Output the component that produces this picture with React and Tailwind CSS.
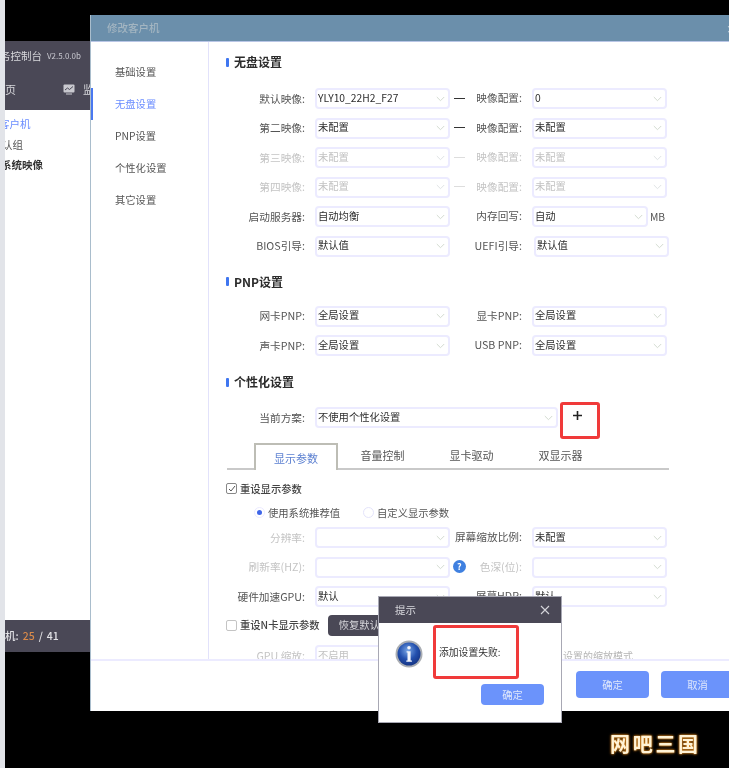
import React from "react";

const FONT = "font-['Noto_Sans_CJK_SC','Noto_Sans',sans-serif]";

function Chevron({ muted }) {
  return (
    <svg width="9" height="6" viewBox="0 0 9 6" fill="none" className="shrink-0">
      <path d="M0.8 1l3.7 3.7L8.2 1" stroke={muted ? "#dfe3e4" : "#d3dbd0"} strokeWidth="1" />
    </svg>
  );
}

function Select({ value = "", w = "w-[135px]", off = false }) {
  return (
    <div className={`${w} h-[21px] shrink-0 flex items-center justify-between pl-[1px] pr-[3px] bg-white border-2 border-[#ecebff] rounded-[4px] text-[10.3px]`}>
      <span className={`whitespace-nowrap leading-[14px] pb-[2px] ${off ? "text-[#c2c2c2]" : "text-[#2e2e2e]"}`}>{value}</span>
      <Chevron muted={off} />
    </div>
  );
}

function Label({ children, off, w = "w-[96px]" }) {
  return (
    <div className={`${w} shrink-0 text-right whitespace-nowrap leading-[14px] text-[10.7px] ${off ? "text-[#c4c4c4]" : "text-[#555]"}`}>{children}</div>
  );
}

function Row({ left, value, right, value2, off, dash }) {
  return (
    <div className="flex items-center h-[21px]">
      <Label off={off}>{left}</Label>
      <div className="w-[10px] shrink-0" />
      <Select value={value} off={off} />
      <div className="w-[72px] shrink-0 flex items-center justify-end whitespace-nowrap text-[10.7px]">
        {dash && <span className={`w-[11px] h-px mr-[11px] ${off ? "bg-[#ddd]" : "bg-[#333]"}`} />}
        <span className={off ? "text-[#c4c4c4]" : "text-[#555]"}>{right}</span>
      </div>
      <div className="w-[10px] shrink-0" />
      <Select value={value2} off={off} />
    </div>
  );
}

function Title({ children, cls = "" }) {
  return (
    <div className={`flex items-center h-[16px] ml-[17px] ${cls}`}>
      <span className="w-[3px] h-[9px] bg-[#3f76f0] rounded-[1px] mr-[5px]" />
      <span className="text-[12px] font-bold text-[#2c2c2c]">{children}</span>
    </div>
  );
}

function InfoIcon() {
  return (
    <svg width="28" height="28" viewBox="0 0 28 28">
      <defs>
        <radialGradient id="b" cx="45%" cy="35%" r="70%">
          <stop offset="0%" stopColor="#7aa7e6" />
          <stop offset="55%" stopColor="#2350ae" />
          <stop offset="100%" stopColor="#13307f" />
        </radialGradient>
      </defs>
      <circle cx="14" cy="14" r="13.5" fill="#a9adb3" />
      <circle cx="14" cy="14" r="11.5" fill="url(#b)" />
      <circle cx="14" cy="7.8" r="1.8" fill="#f4f6fb" />
      <path d="M11.6 11.2h4v9.2h1.3v1.4h-5.6v-1.4h1.2v-7.8h-.9z" fill="#f4f6fb" />
    </svg>
  );
}

export default function App() {
  return (
    <div className={`relative w-[729px] h-[768px] bg-black overflow-hidden text-[10.3px] blur-[0.45px] ${FONT}`}>
      <div className="absolute left-0 top-0 w-[5px] h-full bg-[#e2e4e9]" />

      {/* window behind */}
      <div className="absolute left-[5px] top-[41px] w-[300px] h-[611px] flex flex-col overflow-hidden bg-white">
        <div className="h-[69px] bg-[#4a4856] text-[#d8d8dc] shrink-0">
          <div className="h-[30px] flex items-center text-[10.5px] whitespace-nowrap -ml-[5px]">
            务控制台
            <span className="ml-[5px] text-[8px] text-[#c8c8d0]">V2.5.0.0b</span>
          </div>
          <div className="h-[36px] flex items-center text-[11px]">
            <span>页</span>
            <svg width="12" height="11" viewBox="0 0 12 11" className="ml-[47px]">
              <rect x="0.5" y="0.5" width="11" height="8" rx="1" fill="#c9c9cf" />
              <path d="M2 6l2.5-2 2 1.5L10 2.5" stroke="#4a4856" fill="none" />
              <rect x="3" y="9.5" width="6" height="1" fill="#c9c9cf" />
            </svg>
            <span className="ml-[8px]">监</span>
          </div>
        </div>
        <div className="flex-1 pt-[4px] text-[10.5px]">
          <div className="h-[20px] flex items-center text-[#6b8dff] -ml-[6px]">客户机</div>
          <div className="h-[21px] flex items-center text-[#555] -ml-[3px]">认组</div>
          <div className="h-[20px] flex items-center text-[#333] font-bold -ml-[4px]">系统映像</div>
        </div>
        <div className="h-[32px] bg-[#4a4856] shrink-0 flex items-center text-[#e2e2e6] font-medium text-[10.5px]">
          机:<span className="ml-[4px] text-[#d98a4a]">25</span>
          <span className="mx-[4px]">/</span>41
        </div>
      </div>

      {/* main modal */}
      <div className="absolute left-[90px] top-[15px] w-[650px] h-[696px] bg-white flex flex-col border-l border-[#a9bdcc]">
        <div className="h-[27px] shrink-0 bg-[#6b8fab] flex items-center pl-[16px] text-[#a3b5c1] text-[10.5px] font-medium border-b border-[#b9c6e6]">
          修改客户机
        </div>
        <div className="h-[619px] shrink-0 flex overflow-hidden border-b-2 border-[#ecebff]">
          <div className="w-[118px] shrink-0 border-r border-[#e2e2fb] pt-[14px] text-[#555]">
            {["基础设置", "无盘设置", "PNP设置", "个性化设置", "其它设置"].map((t, i) => (
              <div key={t} className={`relative h-[32px] flex items-center pl-[24px] ${i === 1 ? "text-[#6b8dff]" : ""}`}>
                {i === 1 && <span className="absolute -left-px top-0 w-[3px] h-[32px] bg-[#4a78f0]" />}
                {t}
              </div>
            ))}
          </div>

          <div className="flex-1 pt-[12px] min-w-0">
            <Title>无盘设置</Title>
            <div className="mt-[18px] flex flex-col gap-[8.5px]">
              <Row left="默认映像:" value="YLY10_22H2_F27" right="映像配置:" value2="0" dash />
              <Row left="第二映像:" value="未配置" right="映像配置:" value2="未配置" dash />
              <Row left="第三映像:" value="未配置" right="映像配置:" value2="未配置" dash off />
              <Row left="第四映像:" value="未配置" right="映像配置:" value2="未配置" dash off />
              <div className="flex items-center h-[21px]">
                <Label>启动服务器:</Label>
                <div className="w-[10px] shrink-0" />
                <Select value="自动均衡" />
                <div className="w-[72px] shrink-0 text-right text-[#555] text-[10.7px]">内存回写:</div>
                <div className="w-[10px] shrink-0" />
                <Select value="自动" w="w-[116px]" />
                <span className="ml-[2px] text-[#555]">MB</span>
              </div>
              <div className="flex items-center h-[21px]">
                <Label>BIOS引导:</Label>
                <div className="w-[10px] shrink-0" />
                <Select value="默认值" />
                <div className="w-[72px] shrink-0 text-right text-[#555] text-[10.7px]">UEFI引导:</div>
                <div className="w-[12px] shrink-0" />
                <Select value="默认值" />
              </div>
            </div>

            <Title cls="mt-[17px]">PNP设置</Title>
            <div className="mt-[16px] flex flex-col gap-[8.5px]">
              <Row left="网卡PNP:" value="全局设置" right="显卡PNP:" value2="全局设置" />
              <Row left="声卡PNP:" value="全局设置" right="USB PNP:" value2="全局设置" />
            </div>

            <Title cls="mt-[18px]">个性化设置</Title>
            <div className="mt-[17px] flex items-center h-[21px]">
              <Label>当前方案:</Label>
              <div className="w-[10px] shrink-0" />
              <Select value="不使用个性化设置" w="w-[243px]" />
              <div className="w-[40px] ml-[2px] h-[37px] mt-[6px] shrink-0 border-[3px] border-[#f03a3a] rounded-[3px] flex justify-center pt-[5px] pr-[5px]">
                <svg width="11" height="11" viewBox="0 0 11 11"><path d="M5.5 1v9M1 5.5h9" stroke="#222" strokeWidth="1.6" /></svg>
              </div>
            </div>

            <div className="mt-[15px] ml-[18px] w-[442px] h-[27px] flex border-b-2 border-[#c9c9c9] text-[#555] text-[11px] items-end">
              <div className="w-[27px] shrink-0" />
              <div className="relative top-[2px] w-[84px] h-[27px] flex items-center justify-center border-2 border-b-0 border-[#bdbdb5] bg-white text-[#5a7fd0] pt-[1px]">显示参数</div>
              <div className="w-[89px] h-[26px] flex items-center justify-center">音量控制</div>
              <div className="w-[89px] h-[26px] flex items-center justify-center">显卡驱动</div>
              <div className="w-[89px] h-[26px] flex items-center justify-center">双显示器</div>
            </div>

            <div className="mt-[10px] ml-[17px] h-[17px] flex items-center font-medium text-[#444]">
              <span className="w-[11px] h-[11px] border border-[#888] rounded-[2px] flex items-center justify-center mr-[3px]">
                <svg width="8" height="8" viewBox="0 0 8 8"><path d="M1 4l2 2 4-5" stroke="#555" fill="none" strokeWidth="1" /></svg>
              </span>
              重设显示参数
            </div>
            <div className="mt-[7px] ml-[45px] h-[17px] flex items-center text-[#555]">
              <span className="w-[11px] h-[11px] rounded-full border border-[#ecebff] flex items-center justify-center mr-[3px]">
                <span className="w-[5px] h-[5px] rounded-full bg-[#3f66e8]" />
              </span>
              使用系统推荐值
              <span className="ml-[23px] w-[11px] h-[11px] rounded-full border border-[#e4e4fb] mr-[3px]" />
              自定义显示参数
            </div>

            <div className="mt-[6px] flex flex-col gap-[8.5px]">
              <div className="flex items-center h-[21px]">
                <Label off>分辨率:</Label>
                <div className="w-[10px] shrink-0" />
                <Select />
                <div className="w-[72px] shrink-0 text-right text-[#555] whitespace-nowrap text-[10.7px]">屏幕缩放比例:</div>
                <div className="w-[10px] shrink-0" />
                <Select value="未配置" />
              </div>
              <div className="flex items-center h-[21px]">
                <Label off>刷新率(HZ):</Label>
                <div className="w-[10px] shrink-0" />
                <Select />
                <div className="w-[72px] shrink-0 flex items-center justify-end text-[#c4c4c4] text-[10.7px]">
                  <span className="w-[13px] h-[13px] rounded-full bg-[#3f80e0] text-white text-[9px] font-bold flex items-center justify-center mr-[14px]">?</span>
                  色深(位):
                </div>
                <div className="w-[10px] shrink-0" />
                <Select />
              </div>
              <Row left="硬件加速GPU:" value="默认" right="屏幕HDR:" value2="默认" />
            </div>

            <div className="mt-[6px] ml-[17px] h-[24px] flex items-center font-medium text-[#444]">
              <span className="w-[11px] h-[11px] border border-[#c4c4c4] rounded-[2px] mr-[3px]" />
              重设N卡显示参数
              <span className="ml-[8px] h-[21px] w-[74px] shrink-0 rounded-[4px] bg-[#4a4856] text-[#d8d8dc] font-normal flex items-center pl-[11px]">恢复默认</span>
            </div>

            <div className="mt-[8px] flex items-center h-[21px]">
              <Label off>GPU 缩放:</Label>
              <div className="w-[10px] shrink-0" />
              <Select value="不启用" off />
              <span className="ml-[113px] text-[#b5b5b5] whitespace-nowrap text-[10px]">设置的缩放模式</span>
            </div>
          </div>
        </div>
        <div className="flex-1 flex justify-start pl-[485px] pt-[10px] gap-[12px]">
          <div className="w-[73px] h-[27px] rounded-[4px] bg-[#6b93fb] text-[#dfe7fb] flex items-center justify-center">确定</div>
          <div className="w-[73px] h-[27px] rounded-[4px] bg-[#6b93fb] text-[#dfe7fb] flex items-center justify-center">取消</div>
        </div>
      </div>

      {/* close glyph in title bar */}
      <div className="absolute left-[726px] top-[22px] text-[#cfd9e2] text-[10px] leading-[14px]">×</div>

      {/* alert dialog */}
      <div className="absolute left-[378px] top-[596px] w-[184px] h-[127px] bg-white border border-[#a8a8b4] flex flex-col">
        <div className="h-[26px] shrink-0 bg-[#4a4856] flex items-center justify-between pl-[16px] pr-[11px] text-[#d9d9de] text-[10.5px]">
          提示
          <svg width="10" height="10" viewBox="0 0 10 10"><path d="M1 1l8 8M9 1l-8 8" stroke="#d5d5da" strokeWidth="1.1" /></svg>
        </div>
        <div className="flex items-start pl-[16px] pt-[2px]">
          <div className="pt-[15px]"><InfoIcon /></div>
          <div className="ml-[10px] w-[86px] h-[54px] border-[3px] border-[#f03a3a] rounded-[3px] flex items-center pl-[3px] text-[#333] text-[9.8px] whitespace-nowrap">添加设置失败:</div>
        </div>
        <div className="flex justify-end pr-[17px] mt-[5px]">
          <div className="w-[63px] h-[21px] rounded-[4px] bg-[#6b93fb] text-[#dfe7fb] flex items-center justify-center">确定</div>
        </div>
      </div>

      {/* watermark */}
      <div className="absolute left-[610px] top-[730px] w-[90px] text-[20px] leading-[28px] font-bold text-[#fff3d6] tracking-[2.7px] whitespace-nowrap [text-shadow:0_0_3px_#e08a20,0_0_2px_#e08a20]">
        网吧三国
      </div>
    </div>
  );
}
